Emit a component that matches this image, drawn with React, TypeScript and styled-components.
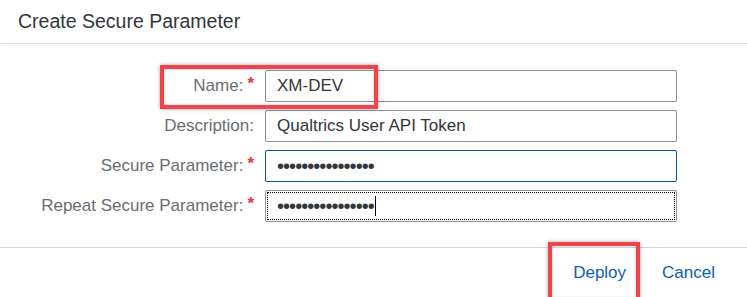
import React from "react";
import styled, { createGlobalStyle } from "styled-components";

const Global = createGlobalStyle`
  html, body { margin: 0; padding: 0; background: #fff; }
  body { font-family: "Liberation Sans", Arial, sans-serif; }
`;

const Dialog = styled.div`
  position: relative;
  width: 747px;
  height: 297px;
  display: flex;
  flex-direction: column;
  background: #fff;
  overflow: hidden;
`;

const Header = styled.header`
  height: 44px;
  flex: none;
  box-sizing: border-box;
  padding-left: 18px;
  display: flex;
  align-items: center;
  border-bottom: 1px solid #dedede;
  box-shadow: 0 1px 2px rgba(0, 0, 0, 0.05);
`;

const Title = styled.h1`
  margin: 0;
  font-size: 19.5px;
  font-weight: normal;
  color: #32363a;
`;

const Form = styled.div`
  flex: 1;
  display: grid;
  grid-template-columns: 254px 412px;
  grid-auto-rows: 32px;
  column-gap: 11px;
  row-gap: 8px;
  padding-top: 26px;
  align-content: start;
`;

const Label = styled.label`
  display: flex;
  justify-content: flex-end;
  align-items: center;
  gap: 4px;
  font-size: 17px;
  color: #6a6d70;
`;

const Required = styled.span`
  color: #e5353d;
  font-size: 17px;
  font-weight: bold;
  margin-top: -4px;
`;

type Variant = "default" | "active" | "focused";

const Field = styled.div<{ $variant?: Variant }>`
  box-sizing: border-box;
  height: 32px;
  padding: 0 11px;
  display: flex;
  align-items: center;
  border: 1px solid ${(p) => (p.$variant === "active" ? "#0854a0" : "#89919a")};
  border-radius: 2px;
  font-size: 17px;
  color: #32363a;
  background: #fff;
  outline: ${(p) => (p.$variant === "focused" ? "1px dotted #000" : "none")};
  outline-offset: -3px;
`;

const Dots = styled.span`
  font-size: 20px;
  letter-spacing: -0.95px;
  color: #32363a;
`;

const Caret = styled.span`
  display: inline-block;
  width: 1px;
  height: 20px;
  background: #000;
  margin-left: 1px;
`;

const Footer = styled.footer`
  height: 50px;
  flex: none;
  box-sizing: border-box;
  border-top: 1px solid #d9d9d9;
  display: flex;
  justify-content: flex-end;
  align-items: center;
  padding-right: 14px;
`;

const Button = styled.button`
  border: none;
  background: transparent;
  padding: 0 18px;
  height: 36px;
  font-family: inherit;
  font-size: 17px;
  color: #0a5fb4;
  cursor: pointer;
`;

const Highlight = styled.div<{ $x: number; $y: number; $w: number; $h: number }>`
  position: absolute;
  left: ${(p) => p.$x}px;
  top: ${(p) => p.$y}px;
  width: ${(p) => p.$w}px;
  height: ${(p) => p.$h}px;
  box-sizing: border-box;
  border: 4px solid #f1434a;
  box-shadow: 0 0 4px rgba(0, 0, 0, 0.35), inset 0 0 3px rgba(0, 0, 0, 0.25);
  pointer-events: none;
`;

const DOTS = "\u2022".repeat(16);

export default function App() {
  return (
    <>
      <Global />
      <Dialog>
        <Header>
          <Title>Create Secure Parameter</Title>
        </Header>
        <Form>
          <Label>
            Name:<Required>*</Required>
          </Label>
          <Field>XM-DEV</Field>
          <Label>Description:</Label>
          <Field>Qualtrics User API Token</Field>
          <Label>
            Secure Parameter:<Required>*</Required>
          </Label>
          <Field $variant="active">
            <Dots>{DOTS}</Dots>
          </Field>
          <Label>
            Repeat Secure Parameter:<Required>*</Required>
          </Label>
          <Field $variant="focused">
            <Dots>{DOTS}</Dots>
            <Caret />
          </Field>
        </Form>
        <Footer>
          <Button>Deploy</Button>
          <Button>Cancel</Button>
        </Footer>
        <Highlight $x={160} $y={65} $w={218} $h={44} />
        <Highlight $x={548} $y={242} $w={92} $h={60} />
      </Dialog>
    </>
  );
}
